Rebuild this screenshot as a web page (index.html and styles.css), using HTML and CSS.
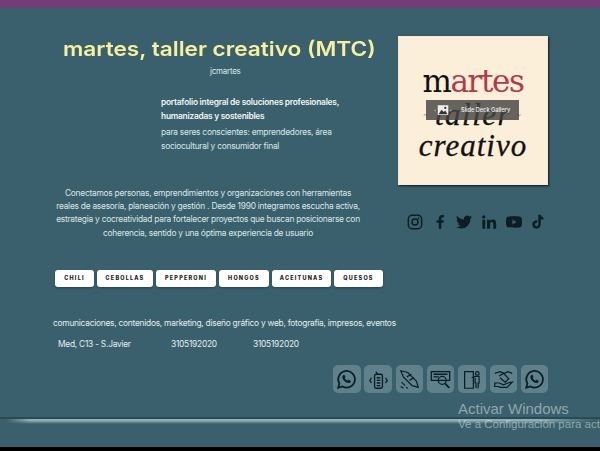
FILE: index.html
```html
<!DOCTYPE html>
<html lang="es">
<head>
<meta charset="utf-8">
<title>martes, taller creativo</title>
<link rel="stylesheet" href="styles.css">
</head>
<body>
<div class="page">
  <div class="topbar"></div>
  <div class="main">
    <div class="left">
      <h1 class="title">martes, taller creativo (MTC)</h1>
      <div class="author">jcmartes</div>
      <div class="intro">
        <p class="lead">portafolio integral de soluciones profesionales, humanizadas y sostenibles</p>
        <p class="sub">para seres conscientes: emprendedores, área sociocultural y consumidor final</p>
      </div>
      <p class="about">Conectamos personas, emprendimientos y organizaciones con herramientas<br>reales de asesoría, planeación y gestión . Desde 1990 integramos escucha activa,<br>estrategia y cocreatividad para fortalecer proyectos que buscan posicionarse con<br>coherencia, sentido y una óptima experiencia de usuario</p>
      <div class="chips">
        <span class="chip chip-chili">CHILI</span>
        <span class="chip chip-cebollas">CEBOLLAS</span>
        <span class="chip chip-pepperoni">PEPPERONI</span>
        <span class="chip chip-hongos">HONGOS</span>
        <span class="chip chip-aceitunas">ACEITUNAS</span>
        <span class="chip chip-quesos">QUESOS</span>
      </div>
      <p class="services">comunicaciones, contenidos, marketing, diseño gráfico y web, fotografía, impresos, eventos</p>
      <div class="contact">
        <span class="c-place">Med, C13 - S.Javier</span>
        <span class="c-phone">3105192020</span>
        <span class="c-phone">3105192020</span>
      </div>
    </div>
    <div class="right">
      <div class="logo">
        <div class="logo-martes"><span class="ink">m</span><span class="red">artes</span></div>
        <div class="logo-taller"><span class="dash">~</span><span>taller</span><span class="dash">~</span></div>
        <div class="logo-creativo">creativo</div>
        <div class="gallery">
          <svg class="gallery-icon" viewBox="0 0 24 20"><path d="M1 10h1M22 10h1" stroke="#eee" stroke-width="2"/><rect x="5" y="3" width="14" height="13" fill="#eee"/><path d="M6 15l4-6 3 3 2-2 3 5z" fill="#333"/><circle cx="15" cy="6.500" r="1.500" fill="#333"/></svg>
          <span>Slide Deck Gallery</span>
        </div>
      </div>
      <div class="social">
        <svg class="s-icon" viewBox="0 0 24 24"><rect x="2" y="2" width="20" height="20" rx="5.500" fill="none" stroke="#0d1d24" stroke-width="2.200"/><circle cx="12" cy="12" r="4.500" fill="none" stroke="#0d1d24" stroke-width="2.200"/><circle cx="17.500" cy="6.500" r="1.300" fill="#0d1d24"/></svg>
        <svg class="s-icon" viewBox="0 0 24 24"><path fill="#0d1d24" d="M14 22v-9h3.200l.6-3.800H14V7c0-1.100.4-1.800 1.900-1.800h2V1.800C17.400 1.700 16.400 1.600 15.300 1.600c-3 0-5.100 1.800-5.100 5.100v2.500H6.900V13h3.300v9z"/></svg>
        <svg class="s-icon" viewBox="0 0 24 24"><path fill="#0d1d24" d="M23.950 4.570a10 10 0 0 1-2.820.77 4.960 4.960 0 0 0 2.160-2.720c-.95.550-2 .96-3.130 1.190a4.920 4.920 0 0 0-8.380 4.480C7.690 8.090 4.070 6.130 1.640 3.160a4.820 4.820 0 0 0-.67 2.480c0 1.710.87 3.210 2.190 4.100a4.900 4.900 0 0 1-2.230-.62v.06a4.920 4.920 0 0 0 3.950 4.830 5 5 0 0 1-2.210.08 4.940 4.940 0 0 0 4.600 3.420A9.870 9.870 0 0 1 0 19.540a14 14 0 0 0 7.560 2.210c9.050 0 14-7.500 14-13.980 0-.21 0-.42-.02-.63a9.940 9.940 0 0 0 2.460-2.550z"/></svg>
        <svg class="s-icon" viewBox="0 0 24 24"><path fill="#0d1d24" d="M2 8.500h4.300V22H2zM4.150 2a2.450 2.450 0 1 1 0 4.900 2.450 2.450 0 0 1 0-4.900zM9 8.500h4.100v1.900c.7-1.200 2.200-2.300 4.400-2.300 4.400 0 5.200 2.900 5.200 6.600V22h-4.300v-6.500c0-1.600 0-3.600-2.200-3.600s-2.500 1.700-2.500 3.500V22H9z"/></svg>
        <svg class="s-icon" viewBox="0 0 24 24"><path fill="#0d1d24" d="M23.500 6.200a3 3 0 0 0-2.100-2.100C19.500 3.500 12 3.500 12 3.500s-7.500 0-9.400.6A3 3 0 0 0 .5 6.200C0 8.100 0 12 0 12s0 3.900.5 5.800a3 3 0 0 0 2.100 2.100c1.900.6 9.400.6 9.400.6s7.500 0 9.400-.6a3 3 0 0 0 2.100-2.100c.5-1.900.5-5.800.5-5.800s0-3.900-.5-5.800zM9.600 15.600V8.400l6.200 3.600z"/></svg>
        <svg class="s-icon" viewBox="0 0 24 24"><path fill="#0d1d24" d="M12.500 1h3.700c.2 1.900 1.300 3.600 3.800 4v3.700c-1.400 0-2.700-.4-3.800-1.100v7.900c0 3.900-3 6.500-6.400 6.500-3.700 0-6.300-3-6.300-6.300 0-4 3.500-6.900 7.400-6.200v3.900c-1.800-.5-3.600.7-3.600 2.500 0 1.500 1.200 2.500 2.500 2.500 1.500 0 2.700-1.100 2.700-2.800z"/></svg>
      </div>
    </div>
  </div>
  <div class="dock">
    <div class="tile"><svg class="t-icon" viewBox="0 0 24 24"><path fill="none" stroke="#0d1d24" stroke-width="2" d="M2.500 21.500l1.400-5A9.500 9.500 0 1 1 7.500 20z"/><path fill="#0d1d24" d="M8.600 6.800c.5-.4 1.100-.3 1.300.2l.8 1.800c.1.300 0 .6-.2.900l-.6.700c.7 1.400 1.800 2.400 3.200 3.100l.8-.9c.2-.2.500-.3.800-.2l1.800.9c.4.200.5.700.3 1.200-.5 1.200-1.900 1.900-3.200 1.500-3.300-1-5.500-3.200-6.300-6-.3-1.200.3-2.400 1.300-3.200z"/></svg></div>
    <div class="tile"><svg class="t-icon" viewBox="0 0 24 24"><g fill="none" stroke="#0d1d24" stroke-width="1.500"><rect x="7.500" y="6" width="9" height="16" rx="2"/><path d="M9 3l2 3M10 10h4M10 13h4M10 16h4M10 19h4M4 10l-2 3 2 3M20 10l2 3-2 3"/></g></svg></div>
    <div class="tile"><svg class="t-icon" viewBox="0 0 24 24"><g fill="none" stroke="#0d1d24" stroke-width="1.400"><path d="M2 2l8 2 10 10 2 7-7-2L5 9z"/><path d="M9 9l5-3M12 13l5-3M3 15l4 4M2 20l3 2M8 21l2 1"/></g></svg></div>
    <div class="tile"><svg class="t-icon" viewBox="0 0 24 24"><g fill="none" stroke="#0d1d24" stroke-width="1.500"><rect x="1.500" y="3" width="21" height="10"/><path d="M4 6h16M4 9h6"/><circle cx="14" cy="13" r="4.500"/><path d="M17 16.500l5 5" stroke-width="2.200"/></g></svg></div>
    <div class="tile"><svg class="t-icon" viewBox="0 0 24 24"><g fill="none" stroke="#0d1d24" stroke-width="1.400"><path d="M3 3h10v19H3z"/><circle cx="17.500" cy="5" r="2"/><path d="M11 10l4-1.500h4.500V16h-1v6M16 22v-6h-1V10"/></g></svg></div>
    <div class="tile"><svg class="t-icon" viewBox="0 0 24 24"><g fill="none" stroke="#0d1d24" stroke-width="1.400"><path d="M2 5l6-2 5 2 4-2 5 2M7 8l5-3 6 6-4 4-6-5"/><path d="M2 16h5l5 2 5-2 5-1-6 6H8l-2-1H2z"/></g></svg></div>
    <div class="tile"><svg class="t-icon" viewBox="0 0 24 24"><path fill="none" stroke="#0d1d24" stroke-width="2" d="M2.500 21.500l1.400-5A9.500 9.500 0 1 1 7.500 20z"/><path fill="#0d1d24" d="M8.600 6.800c.5-.4 1.100-.3 1.300.2l.8 1.800c.1.300 0 .6-.2.900l-.6.700c.7 1.400 1.800 2.400 3.200 3.100l.8-.9c.2-.2.500-.3.800-.2l1.800.9c.4.200.5.700.3 1.200-.5 1.200-1.900 1.900-3.200 1.500-3.300-1-5.500-3.200-6.300-6-.3-1.200.3-2.400 1.300-3.200z"/></svg></div>
  </div>
  <div class="rule"></div>
  <div class="activate">
    <div class="a-title">Activar Windows</div>
    <div class="a-sub">Ve a Configuración para activar Windows</div>
  </div>
</div>
</body>
</html>
```

FILE: styles.css
```css
* { box-sizing: border-box; }
html, body { margin: 0; padding: 0; background: #000; }
body { width: 600px; height: 451px; overflow: hidden; }
p, h1 { margin: 0; }

.page {
  position: relative;
  width: 600px;
  height: 447px;
  overflow: hidden;
  background: #39606c;
  color: #e6eeee;
  font-family: "Inter", "Noto Sans", sans-serif;
  font-size: 8.400px;
  letter-spacing: -.25px;
}

.topbar {
  height: 8px;
  background: linear-gradient(#5d4a78 0, #7a3a78 30%, #7a3a78 65%, #5f4a78 100%);
}

.main { display: flex; height: 357px; }
.left { width: 398px; flex: none; display: flex; flex-direction: column; }
.right { flex: none; width: 150px; padding-top: 28px; display: flex; flex-direction: column; }

.title {
  margin: 26px 0 0 63px;
  width: 276px;
  font-size: 20px;
  line-height: 30px;
  font-weight: 600;
  letter-spacing: 0;
  color: #f7f0a0;
  white-space: nowrap;
  transform: scaleX(1.13);
  transform-origin: left center;
}

.author {
  margin: 2px 0 0 210px;
  font-size: 8px;
  line-height: 11px;
  color: #dfe9ea;
}

.intro { margin: 18px 0 0 161px; width: 185px; }
.lead { font-weight: 600; line-height: 14px; color: #f2f5f5; }
.sub { margin-top: 2px; line-height: 14px; color: #dce7e8; }

.about {
  margin: 34px 0 0 50px;
  width: 316px;
  text-align: center;
  line-height: 13.200px;
  color: #dce7e8;
  white-space: nowrap;
}

.chips { display: flex; gap: 3px; margin: 30px 0 0 55px; }
.chip {
  height: 17px;
  display: flex;
  align-items: center;
  justify-content: center;
  background: #fff;
  border-radius: 3px;
  color: #1b1b1b;
  font-size: 5.500px;
  font-weight: 800;
  letter-spacing: 1.200px;
  box-shadow: 0 1px 2px rgba(0, 0, 0, .3);
}
.chip-chili { width: 39px; }
.chip-cebollas { width: 56px; }
.chip-pepperoni { width: 60px; }
.chip-hongos { width: 50px; }
.chip-aceitunas { width: 59px; }
.chip-quesos { width: 49px; }

.services {
  margin: 30px 0 0 53px;
  line-height: 12px;
  white-space: nowrap;
  color: #e6eeee;
}

.contact { display: flex; margin: 9px 0 0 58px; line-height: 12px; color: #e6eeee; }
.c-place { width: 113px; }
.c-phone { width: 82px; }

.logo {
  position: relative;
  width: 150px;
  height: 149px;
  background: #fbefd9;
  border: 1px solid #f3ead8;
  box-shadow: 1px 1px 2px #111b20;
  color: #111;
  display: flex;
  flex-direction: column;
  align-items: center;
  overflow: hidden;
  letter-spacing: 0;
}
.logo-martes {
  margin-top: 27px;
  font-family: "DejaVu Serif", "Liberation Serif", serif;
  font-size: 31px;
  line-height: 34px;
  letter-spacing: -1.400px;
}
.red { color: #b23a48; }
.logo-taller {
  display: flex;
  gap: 5px;
  align-items: center;
  margin-top: 3px;
  font-family: "Liberation Serif", serif;
  font-style: italic;
  font-size: 31px;
  line-height: 28px;
  letter-spacing: 1.500px;
  -webkit-text-stroke: .3px #111;
}
.dash { font-size: 9px; font-style: normal; color: #555; -webkit-text-stroke: 0; }
.logo-creativo {
  margin-top: 2px;
  font-family: "Liberation Serif", serif;
  font-style: italic;
  font-size: 31px;
  line-height: 30px;
  letter-spacing: 1px;
  -webkit-text-stroke: .3px #111;
}
.gallery {
  position: absolute;
  left: 27px;
  top: 63px;
  width: 93px;
  height: 20px;
  padding-left: 8px;
  display: flex;
  align-items: center;
  gap: 9px;
  background: rgba(70, 70, 66, .82);
  color: #e8e8e8;
  font-size: 5.600px;
  font-weight: 600;
  white-space: nowrap;
}
.gallery-icon { width: 18px; height: 15px; flex: none; }

.social { display: flex; align-items: center; gap: 8.700px; margin: 29px 0 0 9px; }
.s-icon { width: 16px; height: 16px; flex: none; }

.dock { display: flex; gap: 3.830px; margin-left: 333px; }
.tile {
  width: 27.500px;
  height: 28px;
  flex: none;
  display: flex;
  align-items: center;
  justify-content: center;
  background: #5f818b;
  border-radius: 5px;
}
.t-icon { width: 21px; height: 21px; }

.rule {
  height: 7px;
  margin-top: 24px;
  background: linear-gradient(90deg, rgba(143, 176, 181, 0) 1%, #8fb0b5 5%, #8fb0b5 90%, rgba(143, 176, 181, 0) 99%);
  border-top: 2px solid #2a4a55;
  mask-image: linear-gradient(#000 50%, transparent);
}

.activate {
  position: absolute;
  left: 458px;
  top: 400px;
  white-space: nowrap;
  letter-spacing: 0;
  color: rgba(255, 255, 255, .45);
  font-family: "Liberation Sans", "Noto Sans", sans-serif;
}
.a-title { font-size: 15px; line-height: 17px; }
.a-sub { font-size: 11.500px; line-height: 13px; margin-top: 1px; }
```
